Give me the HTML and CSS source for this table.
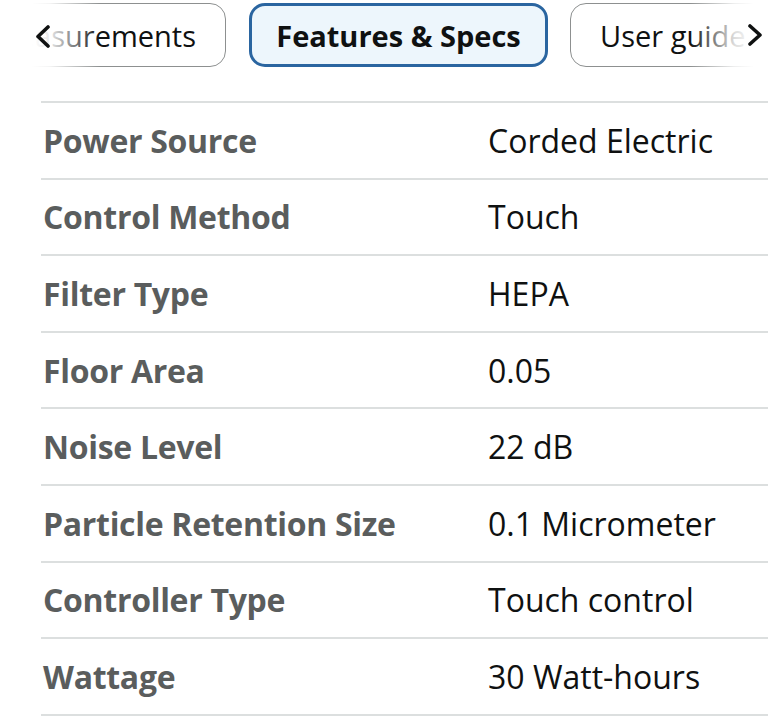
FILE: index.html
```html
<!DOCTYPE html>
<html lang="en">
<head>
<meta charset="utf-8">
<title>Features &amp; Specs</title>
<link rel="stylesheet" href="styles.css">
</head>
<body>
<div class="page">
  <nav class="tabs">
    <div class="tab-strip">
      <div class="lead-slot">
        <button class="tab">Measurements</button>
      </div>
      <button class="tab tab-active">Features &amp; Specs</button>
      <button class="tab">User guide</button>
    </div>
    <div class="fade fade-left"></div>
    <div class="fade fade-right"></div>
    <svg class="chev chev-left" width="18" height="24" viewBox="0 0 18 24"><polyline points="15,3 5,12.5 15,22" fill="none" stroke="#0f1111" stroke-width="3.6" stroke-linecap="round" stroke-linejoin="round"/></svg>
    <svg class="chev chev-right" width="18" height="24" viewBox="0 0 18 24"><polyline points="3,2 13,11 3,20" fill="none" stroke="#0f1111" stroke-width="3.6" stroke-linecap="round" stroke-linejoin="round"/></svg>
  </nav>

  <div class="specs">
    <div class="row"><div class="label">Power Source</div><div class="value">Corded Electric</div></div>
    <div class="row"><div class="label">Control Method</div><div class="value">Touch</div></div>
    <div class="row"><div class="label">Filter Type</div><div class="value">HEPA</div></div>
    <div class="row"><div class="label">Floor Area</div><div class="value">0.05</div></div>
    <div class="row"><div class="label">Noise Level</div><div class="value">22 dB</div></div>
    <div class="row"><div class="label">Particle Retention Size</div><div class="value">0.1 Micrometer</div></div>
    <div class="row"><div class="label">Controller Type</div><div class="value">Touch control</div></div>
    <div class="row"><div class="label">Wattage</div><div class="value">30 Watt-hours</div></div>
  </div>
</div>
</body>
</html>
```

FILE: styles.css
```css
html, body {
  margin: 0;
  padding: 0;
  background: #ffffff;
}

body {
  font-family: "Open Sans", "Noto Sans", "Liberation Sans", sans-serif;
  color: #0f1111;
  overflow: hidden;
}

.page {
  width: 768px;
  height: 723px;
  overflow: hidden;
}

.tabs {
  position: relative;
  height: 101px;
  overflow: hidden;
}

.tab-strip {
  display: flex;
  align-items: flex-start;
  gap: 23px;
  padding-top: 3px;
  white-space: nowrap;
}

.lead-slot {
  width: 226px;
  flex: 0 0 226px;
  display: flex;
  justify-content: flex-end;
}

.tab {
  flex: 0 0 auto;
  height: 64px;
  box-sizing: border-box;
  padding: 0 29px;
  border: 1px solid #8d9090;
  border-radius: 16px;
  background: #ffffff;
  font-family: inherit;
  font-size: 29px;
  color: #0f1111;
  line-height: 1;
}

.tab-active {
  width: 299px;
  border: 3px solid #2a65a0;
  background: #edf6fc;
  padding: 0;
  font-weight: 700;
  margin-right: -1px;
}

.fade {
  position: absolute;
  top: 0;
  height: 80px;
  pointer-events: none;
}

.fade-left {
  left: 0;
  width: 110px;
  background: linear-gradient(to right, #ffffff 0, #ffffff 32px, rgba(255,255,255,0.9) 50px, rgba(255,255,255,0) 100px);
}

.fade-right {
  right: 0;
  width: 80px;
  background: linear-gradient(to left, #ffffff 0, #ffffff 14px, rgba(255,255,255,0.85) 34px, rgba(255,255,255,0) 78px);
}

.chev {
  position: absolute;
  top: 24px;
}

.chev-left {
  left: 33px;
}

.chev-right {
  left: 747px;
}

.specs {
  margin-left: 41px;
  border-bottom: 2px solid #dcdfdf;
}

.row {
  display: grid;
  grid-template-columns: 447px 1fr;
  align-items: center;
  height: 76.6px;
  box-sizing: border-box;
  border-top: 2px solid #dcdfdf;
  font-size: 32px;
  white-space: nowrap;
}

.label {
  padding-left: 2px;
  font-weight: 700;
  letter-spacing: -0.3px;
  color: #5a5d5d;
}

.value {
  color: #0f1111;
}
```
